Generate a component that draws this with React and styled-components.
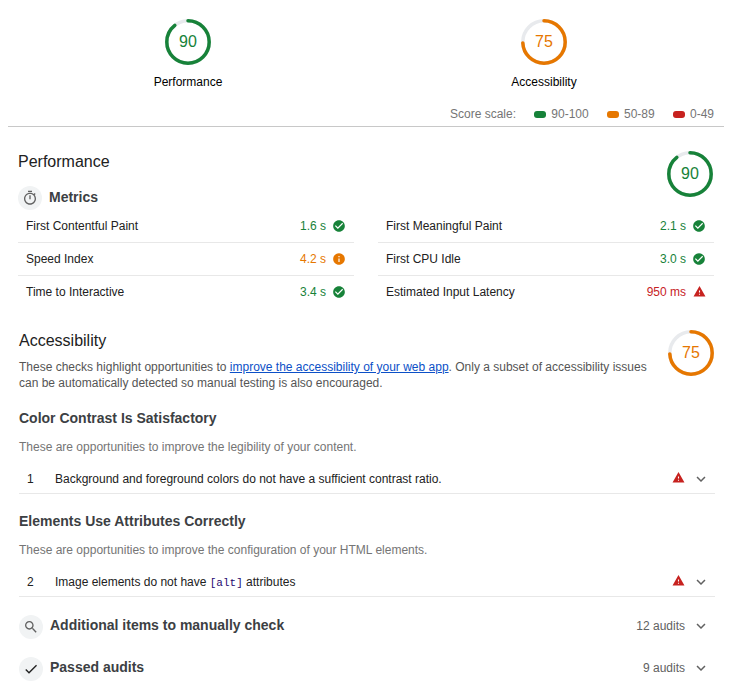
import React from "react";
import styled, { createGlobalStyle } from "styled-components";

const GREEN = "#178239";
const ORANGE = "#e67700";
const RED = "#c7221f";
const LINE = "#e8e8e8";

const GlobalStyle = createGlobalStyle`
  * { box-sizing: border-box; }
  body {
    margin: 0;
    background: #fff;
    color: #212121;
    font: 12px/16px "Liberation Sans", Arial, sans-serif;
  }
  h2, h3, p { margin: 0; font-weight: normal; }
`;

const Page = styled.main`
  width: 730px;
  height: 685px;
  overflow: hidden;
  display: flex;
  flex-direction: column;
`;

const Header = styled.header`
  margin: 0 6px 0 8px;
  height: 127px;
  border-bottom: 1px solid #c8c8c8;
`;

const Scores = styled.div`
  display: grid;
  grid-template-columns: 356px 356px;
  padding: 19px 0 0 2px;
`;

const Score = styled.div`
  display: flex;
  flex-direction: column;
  align-items: center;
  gap: 9px;
  color: #000;
`;

const GaugeBox = styled.div`
  display: grid;
  width: 46px;
  height: 46px;
  flex: none;
  place-items: center;
  color: ${(p) => p.$color};
  > * { grid-area: 1 / 1; }
  span { font-size: 16px; line-height: 46px; }
`;

const Legend = styled.div`
  display: flex;
  justify-content: flex-end;
  padding: 16px 10px 0 0;
  color: #757575;
`;

const LegendItem = styled.span`
  display: flex;
  align-items: center;
  margin-left: 18.3px;
`;

const Pill = styled.i`
  width: 12px;
  height: 7px;
  margin: 1px 5px 0 0;
  border-radius: 3px;
  background: ${(p) => p.$color};
`;

const Section = styled.section`
  display: flex;
  flex-direction: column;
  padding: ${(p) => p.$pad};
`;

const SectionHead = styled.div`
  display: flex;
  justify-content: space-between;
  align-items: flex-start;
  height: ${(p) => p.$height}px;
  padding-right: 1px;
`;

const Title = styled.h2`
  padding-top: 1px;
  font-size: 16px;
  line-height: 20px;
`;

const Subtitle = styled.h3`
  padding-top: ${(p) => p.$top || 0}px;
  font-size: 14px;
  line-height: 18px;
  font-weight: bold;
  color: #3c4043;
`;

const Group = styled.div`
  display: flex;
  align-items: flex-start;
  height: 24px;
  gap: 7px;
`;

const Disc = styled.span`
  display: grid;
  place-items: center;
  width: 24px;
  height: 24px;
  border-radius: 50%;
  background: #f1f3f4;
  color: ${(p) => p.$color || "#616161"};
`;

const Metrics = styled.div`
  display: grid;
  grid-template-columns: 336px 336px;
  column-gap: 24px;
`;

const Metric = styled.div`
  display: flex;
  align-items: center;
  height: 33px;
  padding: 0 8px;
  border-bottom: 1px solid ${(p) => (p.$last ? "transparent" : LINE)};
`;

const Value = styled.span`
  display: flex;
  align-items: center;
  gap: 6px;
  margin-left: auto;
  color: ${(p) => p.$color};
`;

const StateIcon = styled.span`
  display: grid;
  place-items: center;
  width: 14px;
  height: 14px;
  padding-bottom: 0.6px;
`;

const Description = styled.p`
  width: 640px;
  padding-top: 8px;
  color: #555;
  a { color: #0c50c7; }
`;

const Hint = styled.p`
  margin-top: 12px;
  color: #757575;
`;

const Audit = styled.div`
  display: flex;
  align-items: center;
  height: 30px;
  margin-top: 9px;
  padding: 0 5px 0 8px;
  border-bottom: 1px solid ${LINE};
  code { font: 11px/1 "Liberation Mono", monospace; color: #1f0a70; }
`;

const Index = styled.span`
  width: 28px;
`;

const AuditIcons = styled.span`
  display: flex;
  align-items: center;
  gap: 6.5px;
  margin-left: auto;
  > :first-child { margin-bottom: 2px; }
`;

const Clump = styled.div`
  display: flex;
  height: 24px;
  gap: 7px;
  margin-top: 18px;
  padding-right: 5px;
`;

const Count = styled.span`
  display: flex;
  align-items: center;
  gap: 7px;
  height: 22px;
  margin-left: auto;
  color: #616161;
`;

const Svg = styled.svg`
  display: block;
  flex: none;
`;

const PATHS = {
  pass: "M12 2C6.48 2 2 6.48 2 12s4.48 10 10 10 10-4.48 10-10S17.52 2 12 2zm-2 15l-5-5 1.41-1.41L10 14.17l7.59-7.59L19 8l-9 9z",
  info: "M12 2C6.48 2 2 6.48 2 12s4.48 10 10 10 10-4.48 10-10S17.52 2 12 2zm1 15h-2v-6h2v6zm0-8h-2V7h2v2z",
  warn: "M1 21h22L12 2 1 21zm12-3h-2v-2h2v2zm0-4h-2v-4h2v4z",
  more: "M16.59 8.59L12 13.17 7.41 8.59 6 10l6 6 6-6z",
  search: "M15.5 14h-.79l-.28-.27C15.41 12.59 16 11.11 16 9.5 16 5.91 13.09 3 9.5 3S3 5.91 3 9.5 5.91 16 9.5 16c1.61 0 3.09-.59 4.23-1.57l.27.28v.79l5 4.99L20.49 19l-4.99-5zm-6 0C7.01 14 5 11.99 5 9.5S7.01 5 9.5 5 14 7.01 14 9.5 11.99 14 9.5 14z",
  check: "M9 16.17L4.83 12l-1.42 1.41L9 19 21 7l-1.41-1.41z",
  timer: "M15 1H9v2h6V1zm-4 13h2V8h-2v6zm8.03-6.61l1.42-1.42c-.43-.51-.9-.99-1.41-1.41l-1.42 1.42C16.07 4.74 14.12 4 12 4c-4.97 0-9 4.03-9 9s4.02 9 9 9 9-4.03 9-9c0-2.12-.74-4.07-1.97-5.61zM12 20c-3.87 0-7-3.13-7-7s3.13-7 7-7 7 3.13 7 7-3.13 7-7 7z",
};

const COLORS = { pass: GREEN, info: ORANGE, warn: RED };

const METRICS = [
  ["First Contentful Paint", "1.6 s", "pass"],
  ["First Meaningful Paint", "2.1 s", "pass"],
  ["Speed Index", "4.2 s", "info"],
  ["First CPU Idle", "3.0 s", "pass"],
  ["Time to Interactive", "3.4 s", "pass"],
  ["Estimated Input Latency", "950 ms", "warn"],
];

function Icon({ name, size = 14, color = "currentColor" }) {
  return (
    <Svg width={size} height={size} viewBox="0 0 24 24" fill={color}>
      <path d={PATHS[name]} />
    </Svg>
  );
}

function State({ name }) {
  return (
    <StateIcon>
      <Icon name={name} size={name === "warn" ? 13 : 14} color={COLORS[name]} />
    </StateIcon>
  );
}

function Gauge({ score, color }) {
  return (
    <GaugeBox $color={color}>
      <Svg width="46" height="46" viewBox="0 0 46 46" fill="none" strokeWidth="3.5">
        <circle cx="23" cy="23" r="21.2" stroke="#e8eaed" />
        <circle
          cx="23"
          cy="23"
          r="21.2"
          stroke={color}
          strokeLinecap="round"
          pathLength="100"
          strokeDasharray={`${score - 0.7} 100`}
          transform="rotate(-90 23 23)"
        />
      </Svg>
      <span>{score}</span>
    </GaugeBox>
  );
}

function AuditRow({ index, children }) {
  return (
    <Audit>
      <Index>{index}</Index>
      <span>{children}</span>
      <AuditIcons>
        <State name="warn" />
        <Icon name="more" size={18} color="#616161" />
      </AuditIcons>
    </Audit>
  );
}

export default function App() {
  return (
    <Page>
      <GlobalStyle />
      <Header>
        <Scores>
          <Score>
            <Gauge score={90} color={GREEN} />
            <span>Performance</span>
          </Score>
          <Score>
            <Gauge score={75} color={ORANGE} />
            <span>Accessibility</span>
          </Score>
        </Scores>
        <Legend>
          <span>Score scale:</span>
          <LegendItem><Pill $color={GREEN} />90-100</LegendItem>
          <LegendItem><Pill $color={ORANGE} />50-89</LegendItem>
          <LegendItem><Pill $color={RED} />0-49</LegendItem>
        </Legend>
      </Header>

      <Section $pad="24px 16px 0 18px">
        <SectionHead $height={35}>
          <Title>Performance</Title>
          <Gauge score={90} color={GREEN} />
        </SectionHead>
        <Group>
          <Disc><Icon name="timer" size={16} /></Disc>
          <Subtitle $top={2}>Metrics</Subtitle>
        </Group>
        <Metrics>
          {METRICS.map(([name, value, state], i) => (
            <Metric key={name} $last={i > 3}>
              <span>{name}</span>
              <Value $color={COLORS[state]}>
                {value}
                <State name={state} />
              </Value>
            </Metric>
          ))}
        </Metrics>
      </Section>

      <Section $pad="21px 15px 0 19px">
        <SectionHead $height={79}>
          <div>
            <Title>Accessibility</Title>
            <Description>
              These checks highlight opportunities to <a href="#accessibility">improve the accessibility of your web app</a>. Only a subset of accessibility issues can be automatically detected so manual testing is also encouraged.
            </Description>
          </div>
          <Gauge score={75} color={ORANGE} />
        </SectionHead>
        <Subtitle>Color Contrast Is Satisfactory</Subtitle>
        <Hint>These are opportunities to improve the legibility of your content.</Hint>
        <AuditRow index={1}>
          Background and foreground colors do not have a sufficient contrast ratio.
        </AuditRow>
      </Section>

      <Section $pad="18px 15px 0 19px">
        <Subtitle>Elements Use Attributes Correctly</Subtitle>
        <Hint>These are opportunities to improve the configuration of your HTML elements.</Hint>
        <AuditRow index={2}>
          Image elements do not have <code>[alt]</code> attributes
        </AuditRow>
        <Clump>
          <Disc><Icon name="search" size={16} /></Disc>
          <Subtitle $top={1}>Additional items to manually check</Subtitle>
          <Count>12 audits<Icon name="more" size={18} /></Count>
        </Clump>
        <Clump>
          <Disc $color="#212121"><Icon name="check" size={16} /></Disc>
          <Subtitle $top={1}>Passed audits</Subtitle>
          <Count>9 audits<Icon name="more" size={18} /></Count>
        </Clump>
      </Section>
    </Page>
  );
}
